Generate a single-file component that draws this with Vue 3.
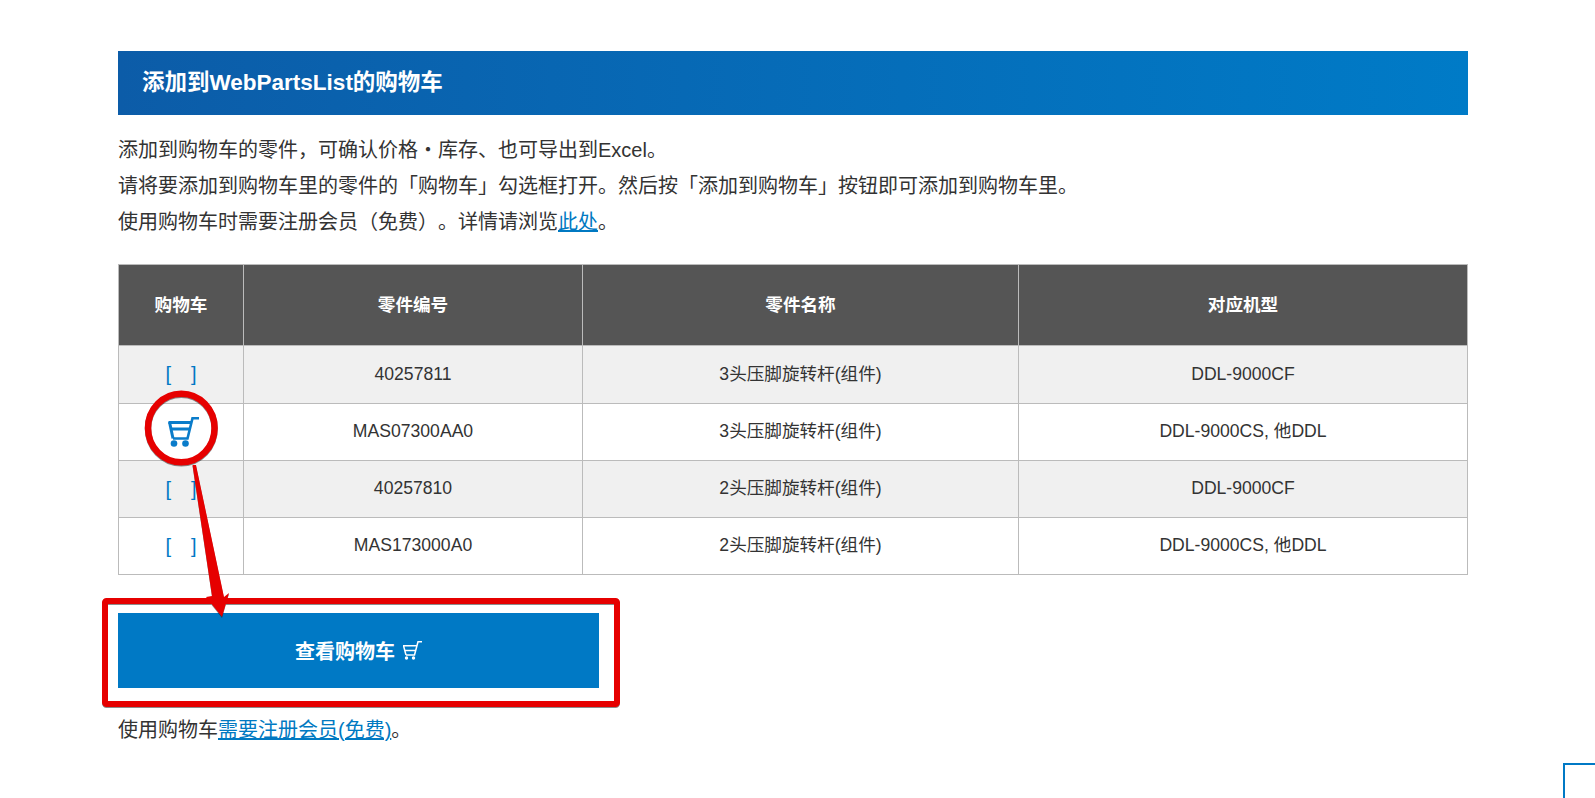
<script setup>
const rows = [
  { no: '40257811', name: '3头压脚旋转杆(组件)', model: 'DDL-9000CF', cart: false },
  { no: 'MAS07300AA0', name: '3头压脚旋转杆(组件)', model: 'DDL-9000CS, 他DDL', cart: true },
  { no: '40257810', name: '2头压脚旋转杆(组件)', model: 'DDL-9000CF', cart: false },
  { no: 'MAS173000A0', name: '2头压脚旋转杆(组件)', model: 'DDL-9000CS, 他DDL', cart: false },
]
</script>

<template>
  <div class="page">
    <main class="content">
      <h2 class="title">添加到WebPartsList的购物车</h2>
      <p class="intro">
        添加到购物车的零件，可确认价格・库存、也可导出到Excel。<br />
        请将要添加到购物车里的零件的「购物车」勾选框打开。然后按「添加到购物车」按钮即可添加到购物车里。<br />
        使用购物车时需要注册会员（免费）。详情请浏览<a href="#">此处</a>。
      </p>
      <table class="parts">
        <colgroup>
          <col class="c1" /><col class="c2" /><col class="c3" /><col class="c4" />
        </colgroup>
        <thead>
          <tr><th>购物车</th><th>零件编号</th><th>零件名称</th><th>对应机型</th></tr>
        </thead>
        <tbody>
          <tr v-for="r in rows" :key="r.no">
            <td>
              <svg v-if="r.cart" class="cart" viewBox="0 0 31 30" fill="none" stroke="#0a7cca">
                <path d="M31 1.300H24.500L19.500 21.500H5" stroke-width="2.600" />
                <path d="M0.500 5.500H23M2.500 12H21.500" stroke-width="3" />
                <path d="M1.500 5L5 21.500" stroke-width="3" />
                <circle cx="6" cy="26.500" r="3.300" fill="#0a7cca" stroke="none" />
                <circle cx="17.500" cy="26.500" r="3.300" fill="#0a7cca" stroke="none" />
              </svg>
              <span v-else class="box">[<i></i>]</span>
            </td>
            <td>{{ r.no }}</td>
            <td>{{ r.name }}</td>
            <td>{{ r.model }}</td>
          </tr>
        </tbody>
      </table>
      <a class="btn" href="#">
        查看购物车
        <svg class="btn-cart" viewBox="0 0 19 19" fill="none" stroke="#fff" stroke-width="1.500">
          <path d="M19 0.800H15L11.500 14H3" />
          <path d="M0 4.700H14M1.500 9.500H13M0.500 4.700L3 14" />
          <circle cx="3.500" cy="17" r="1.700" fill="#fff" stroke="none" />
          <circle cx="10.500" cy="17" r="1.700" fill="#fff" stroke="none" />
        </svg>
      </a>
      <p class="note">使用购物车<a href="#">需要注册会员(免费)</a>。</p>
    </main>

    <svg class="marks" width="1595" height="798" viewBox="0 0 1595 798">
      <g class="ink">
        <ellipse cx="181.300" cy="428" rx="33.300" ry="34.300" fill="none" stroke="#e60000" stroke-width="6.500" />
        <rect x="105" y="601" width="512" height="103" rx="1.500" fill="none" stroke="#e60000" stroke-width="6" />
        <path d="M192.500 465L196 465L224 597L229 593L222 617L206 597L212 596Z" fill="#e60000" />
      </g>
    </svg>
    <div class="totop"></div>
  </div>
</template>

<style scoped>
.page {
  position: relative;
  height: 798px;
  overflow: hidden;
  background: #fff;
  color: #333;
  font-family: "Liberation Sans", "Noto Sans CJK SC", sans-serif;
  text-spacing-trim: space-all;
}
.content {
  width: 1350px;
  margin-left: 118px;
  padding-top: 51px;
}
.title {
  margin: 0;
  height: 64px;
  padding-left: 24px;
  line-height: 64px;
  font-size: 22.500px;
  font-weight: 700;
  color: #fff;
  background: linear-gradient(90deg, #0c5ca8, #007bc7);
}
.intro {
  margin: 17px 0 0;
  font-size: 20px;
  line-height: 36px;
}
a {
  color: #0079c2;
}
.parts {
  width: 1349px;
  margin-top: 24px;
  border-collapse: collapse;
  table-layout: fixed;
  font-size: 17.600px;
  line-height: 26px;
}
.c1 { width: 125px; }
.c2 { width: 339px; }
.c3 { width: 436px; }
.c4 { width: 449px; }
.parts th,
.parts td {
  border: 1px solid #bbb;
  padding: 0;
  text-align: center;
}
.parts th {
  height: 80px;
  background: #555;
  color: #fff;
  font-weight: 700;
}
.parts td {
  height: 54px;
  padding-bottom: 2px;
}
.parts tbody tr:first-child td {
  height: 55px;
}
.parts tbody tr:nth-child(odd) {
  background: #f0f0f0;
}
.box {
  position: relative;
  top: 1px;
  color: #0079c5;
  font-size: 20px;
}
.box i {
  display: inline-block;
  width: 20px;
}
.cart {
  display: block;
  width: 31px;
  height: 30px;
  margin: 0 auto;
  position: relative;
  left: 2px;
  top: 1px;
}
.btn {
  display: flex;
  align-items: center;
  justify-content: center;
  gap: 8px;
  width: 481px;
  height: 75px;
  margin-top: 38px;
  background: #0079c5;
  color: #fff;
  font-size: 20px;
  font-weight: 700;
  text-decoration: none;
}
.btn-cart {
  width: 19px;
  height: 19px;
}
.note {
  margin: 24px 0 0;
  font-size: 20px;
  line-height: 36px;
}
.marks {
  position: absolute;
  left: 0;
  top: 0;
  pointer-events: none;
}
.ink {
  filter: drop-shadow(0 1px 0.400px rgba(0, 0, 0, 0.45));
}
.totop {
  position: absolute;
  left: 1563px;
  top: 763px;
  width: 60px;
  height: 60px;
  border: 2px solid #0079c5;
}
</style>
